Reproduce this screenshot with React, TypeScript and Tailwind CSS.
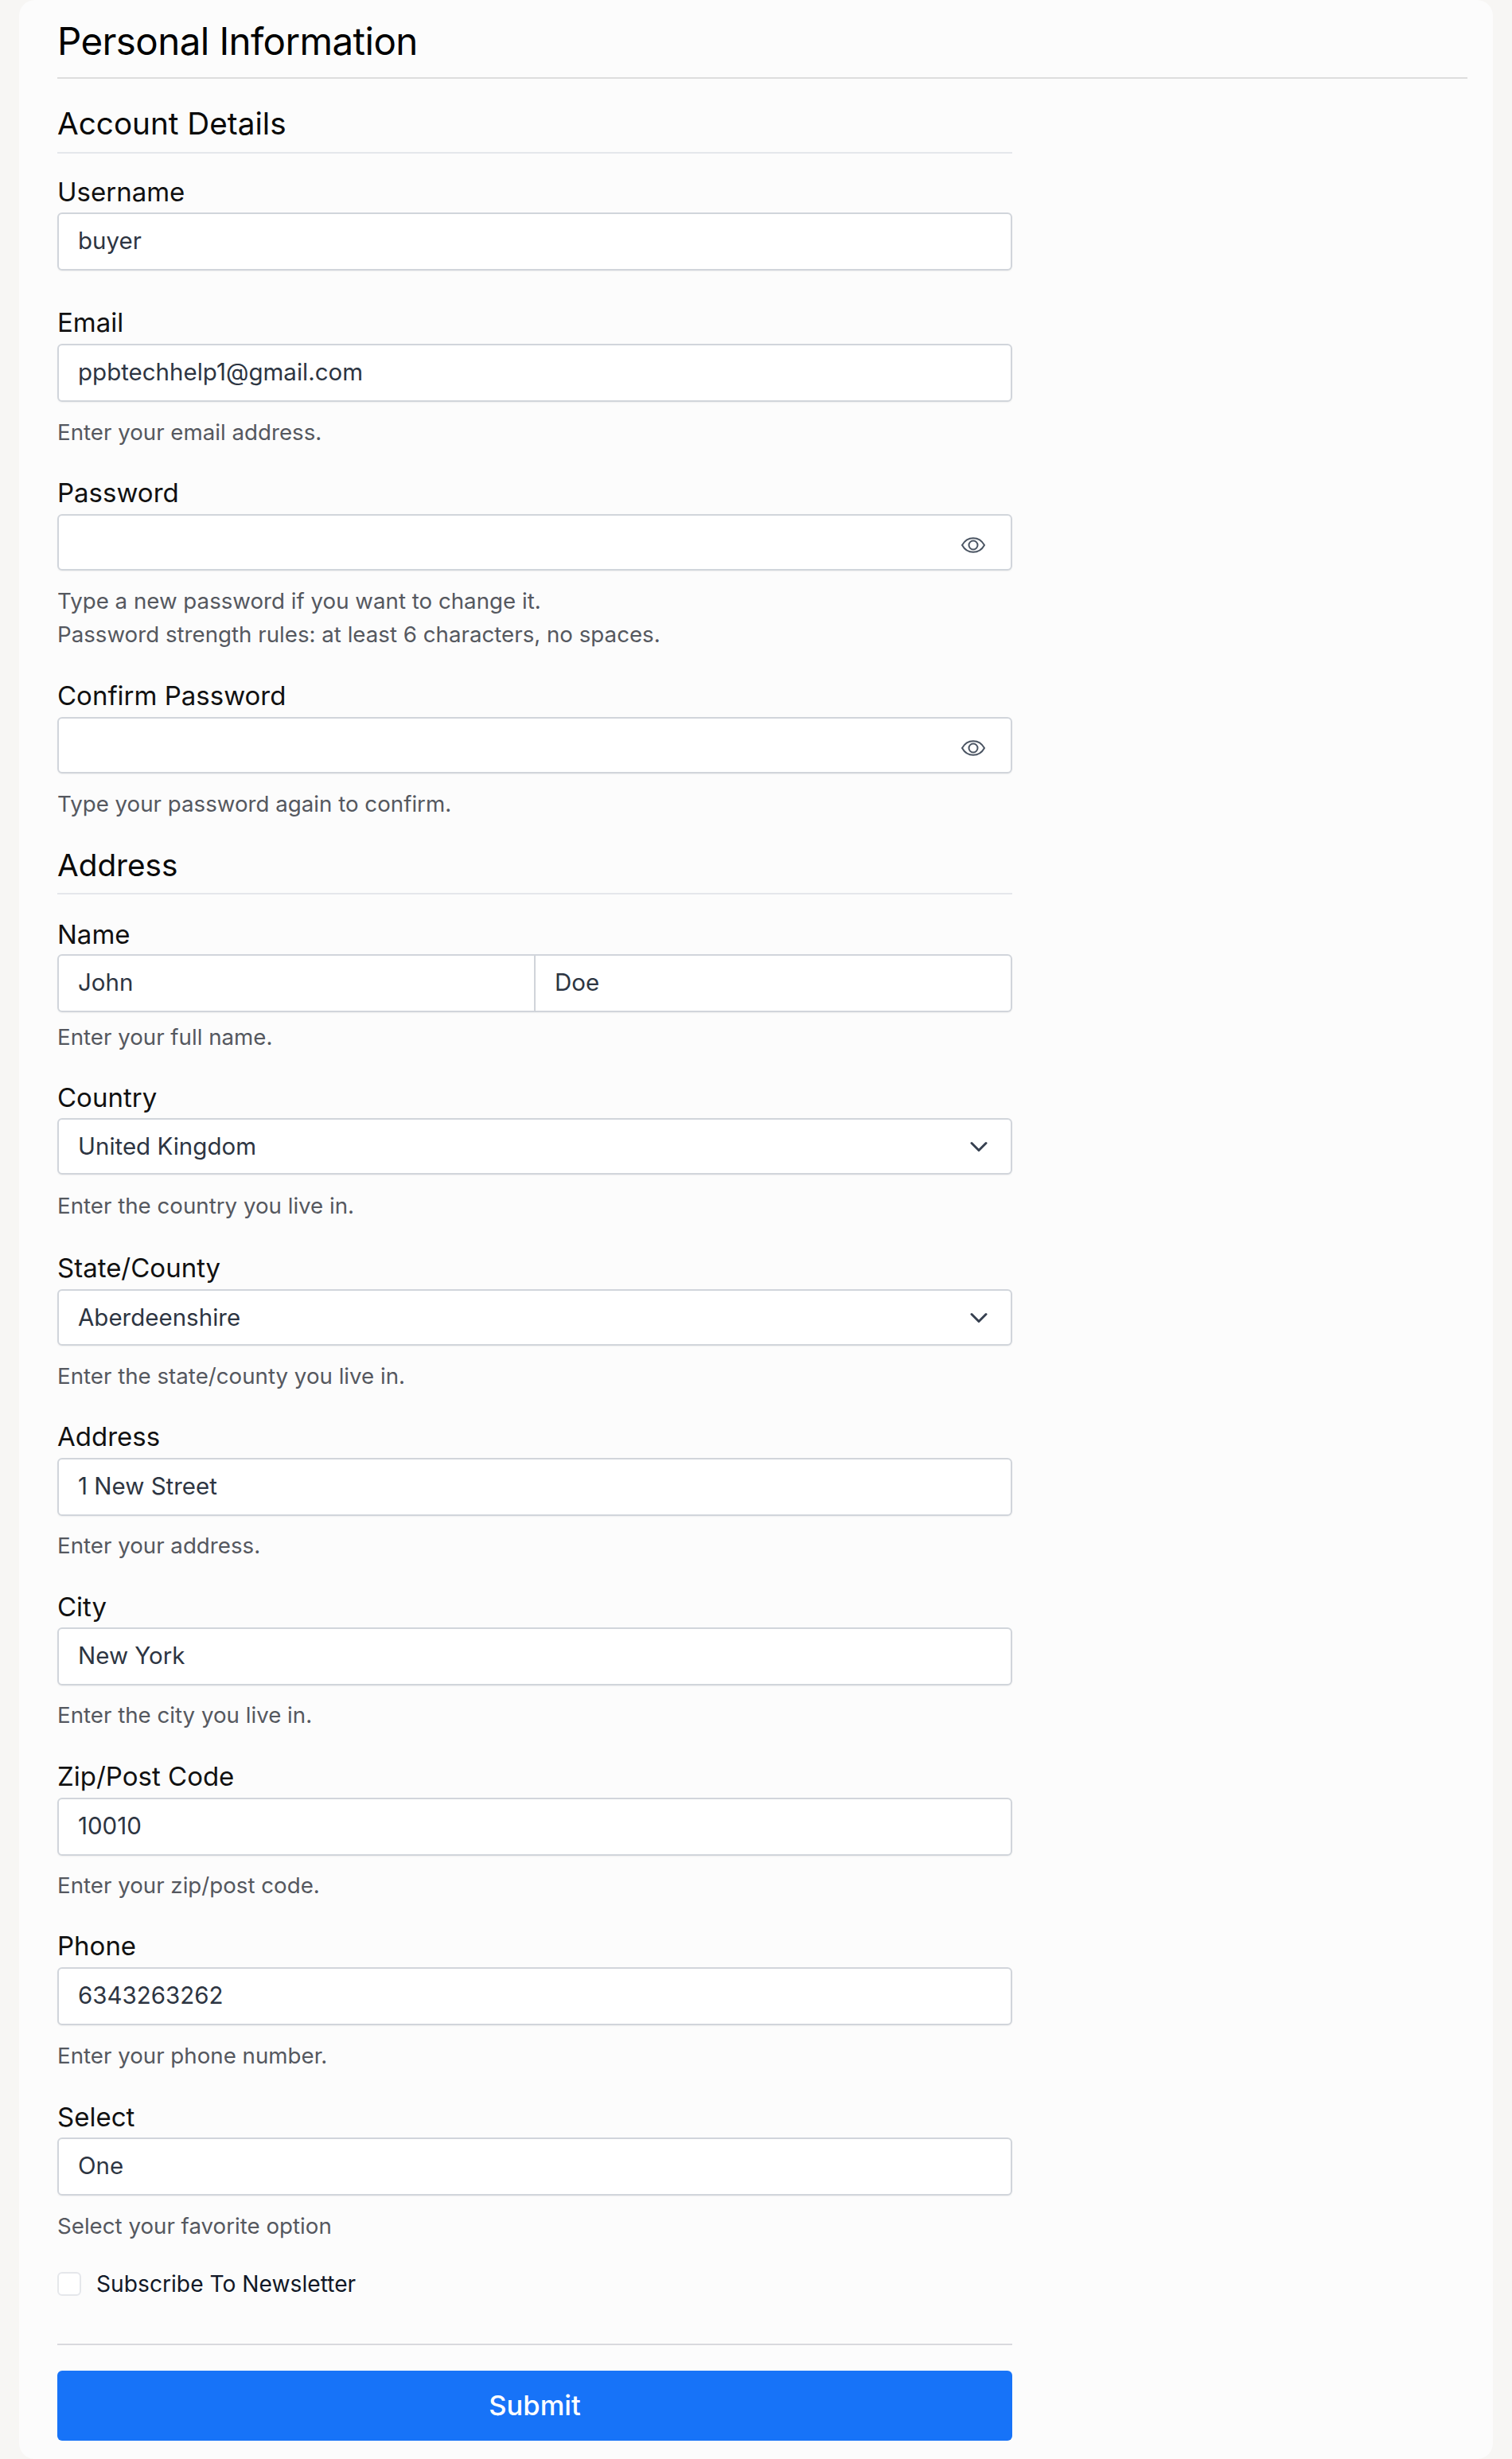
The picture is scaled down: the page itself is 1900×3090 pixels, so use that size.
import React from "react";

const EyeIcon = () => (
  <svg viewBox="0 0 30 20" className="w-[30px] h-[20px] mt-[6px] text-[#4b5563]" fill="none" stroke="currentColor" strokeWidth="2" strokeLinecap="round" strokeLinejoin="round">
    <path d="M1 10C4 4.6 9 1.2 15 1.2S26 4.6 29 10C26 15.4 21 18.8 15 18.8S4 15.4 1 10Z" />
    <circle cx="15" cy="10" r="5.5" />
  </svg>
);

const Chevron = () => (
  <svg viewBox="0 0 22 14" className="w-[22px] h-[14px] text-[#374151]" fill="none" stroke="currentColor" strokeWidth="3" strokeLinecap="round" strokeLinejoin="round">
    <path d="M2 2.5 11 11.5 20 2.5" />
  </svg>
);

const Label = ({ children, mt, mb = "mb-[7px]" }: { children: React.ReactNode; mt: string; mb?: string }) => (
  <div className={"text-[33px] leading-[40px] text-[#111111] " + mb + " " + mt}>{children}</div>
);

const Desc = ({ children, mt }: { children: React.ReactNode; mt: string }) => (
  <div className={"text-[27.7px] leading-[42px] text-[#55585f] " + mt}>{children}</div>
);

const Box = ({ value, h = "h-[73px] pb-[2px]", pr = "pr-[32px]", right }: { value?: string; h?: string; pr?: string; right?: React.ReactNode }) => (
  <div className={"flex items-center justify-between w-full bg-white border-2 border-[#d1d5db] rounded-[6px] pl-[24px] text-[29.5px] text-[#2d3542] shadow-[0_1px_2px_rgba(0,0,0,0.05)] " + h + " " + pr}>
    <span>{value}</span>
    {right}
  </div>
);

const Heading = ({ children, className = "" }: { children: React.ReactNode; className?: string }) => (
  <div className={"border-b-2 border-[#e5e7eb] text-[38.7px] leading-[48px] text-[#0a0a0a] " + className}>{children}</div>
);

export default function App() {
  return (
    <div className="h-[3090px] bg-[#f7f6f4] px-[24px] overflow-hidden" style={{ fontFamily: "Inter, sans-serif" }}>
      <div className="h-[3090px] bg-[#fcfcfc] rounded-[20px] pl-[48px] pr-[32px]">
        <div className="border-b-2 border-[#dedede] pt-[26px] text-[47.5px] tracking-[-0.6px] leading-[52px] text-black h-[99px]">
          Personal Information
        </div>
        <div className="w-[1200px]">
          <Heading className="mt-[32px] h-[62px]">Account Details</Heading>

          <Label mt="mt-[28px]" mb="mb-[6px]">Username</Label>
          <Box value="buyer" />

          <Label mt="mt-[45px]">Email</Label>
          <Box value="ppbtechhelp1@gmail.com" />
          <Desc mt="mt-[17px]">Enter your email address.</Desc>

          <Label mt="mt-[35px]">Password</Label>
          <Box h="h-[71px]" right={<EyeIcon />} />
          <Desc mt="mt-[17px]">Type a new password if you want to change it.<br />Password strength rules: at least 6 characters, no spaces.</Desc>

          <Label mt="mt-[36px]">Confirm Password</Label>
          <Box h="h-[71px]" right={<EyeIcon />} />
          <Desc mt="mt-[17px]">Type your password again to confirm.</Desc>

          <Heading className="mt-[32px] h-[61px]">Address</Heading>

          <Label mt="mt-[30px]" mb="mb-[5px]">Name</Label>
          <div className="flex">
            <div className="w-[601px] flex-none flex items-center h-[73px] pb-[2px] bg-white border-2 border-[#d1d5db] rounded-l-[6px] pl-[24px] text-[29.5px] text-[#2d3542] shadow-[0_1px_2px_rgba(0,0,0,0.05)]">John</div>
            <div className="flex-1 flex items-center h-[73px] pb-[2px] bg-white border-2 border-l-0 border-[#d1d5db] rounded-r-[6px] pl-[24px] text-[29.5px] text-[#2d3542] shadow-[0_1px_2px_rgba(0,0,0,0.05)]">Doe</div>
          </div>
          <Desc mt="mt-[10px]">Enter your full name.</Desc>

          <Label mt="mt-[35px]" mb="mb-[6px]">Country</Label>
          <Box h="h-[71px]" pr="pr-[29px]" value="United Kingdom" right={<Chevron />} />
          <Desc mt="mt-[18px]">Enter the country you live in.</Desc>

          <Label mt="mt-[37px]">State/County</Label>
          <Box h="h-[71px]" pr="pr-[29px]" value="Aberdeenshire" right={<Chevron />} />
          <Desc mt="mt-[17px]">Enter the state/county you live in.</Desc>

          <Label mt="mt-[35px]">Address</Label>
          <Box value="1 New Street" />
          <Desc mt="mt-[16px]">Enter your address.</Desc>

          <Label mt="mt-[36px]" mb="mb-[6px]">City</Label>
          <Box value="New York" />
          <Desc mt="mt-[16px]">Enter the city you live in.</Desc>

          <Label mt="mt-[36px]">Zip/Post Code</Label>
          <Box value="10010" />
          <Desc mt="mt-[16px]">Enter your zip/post code.</Desc>

          <Label mt="mt-[35px]">Phone</Label>
          <Box value="6343263262" />
          <Desc mt="mt-[17px]">Enter your phone number.</Desc>

          <Label mt="mt-[36px]" mb="mb-[6px]">Select</Label>
          <Box value="One" />
          <Desc mt="mt-[17px]">Select your favorite option</Desc>

          <div className="mt-[31px] flex items-center gap-[19px]">
            <div className="w-[30px] h-[30px] bg-white border-2 border-[#e5e7eb] rounded-[6px]" />
            <span className="text-[28.2px] leading-[42px] text-[#111827]">Subscribe To Newsletter</span>
          </div>

          <div className="mt-[54px] border-t-2 border-[#d9d9de]" />
          <div className="mt-[32px] h-[88px] rounded-[6px] bg-[#1773f8] flex items-center justify-center text-white text-[34.5px] font-medium">Submit</div>
        </div>
      </div>
    </div>
  );
}
